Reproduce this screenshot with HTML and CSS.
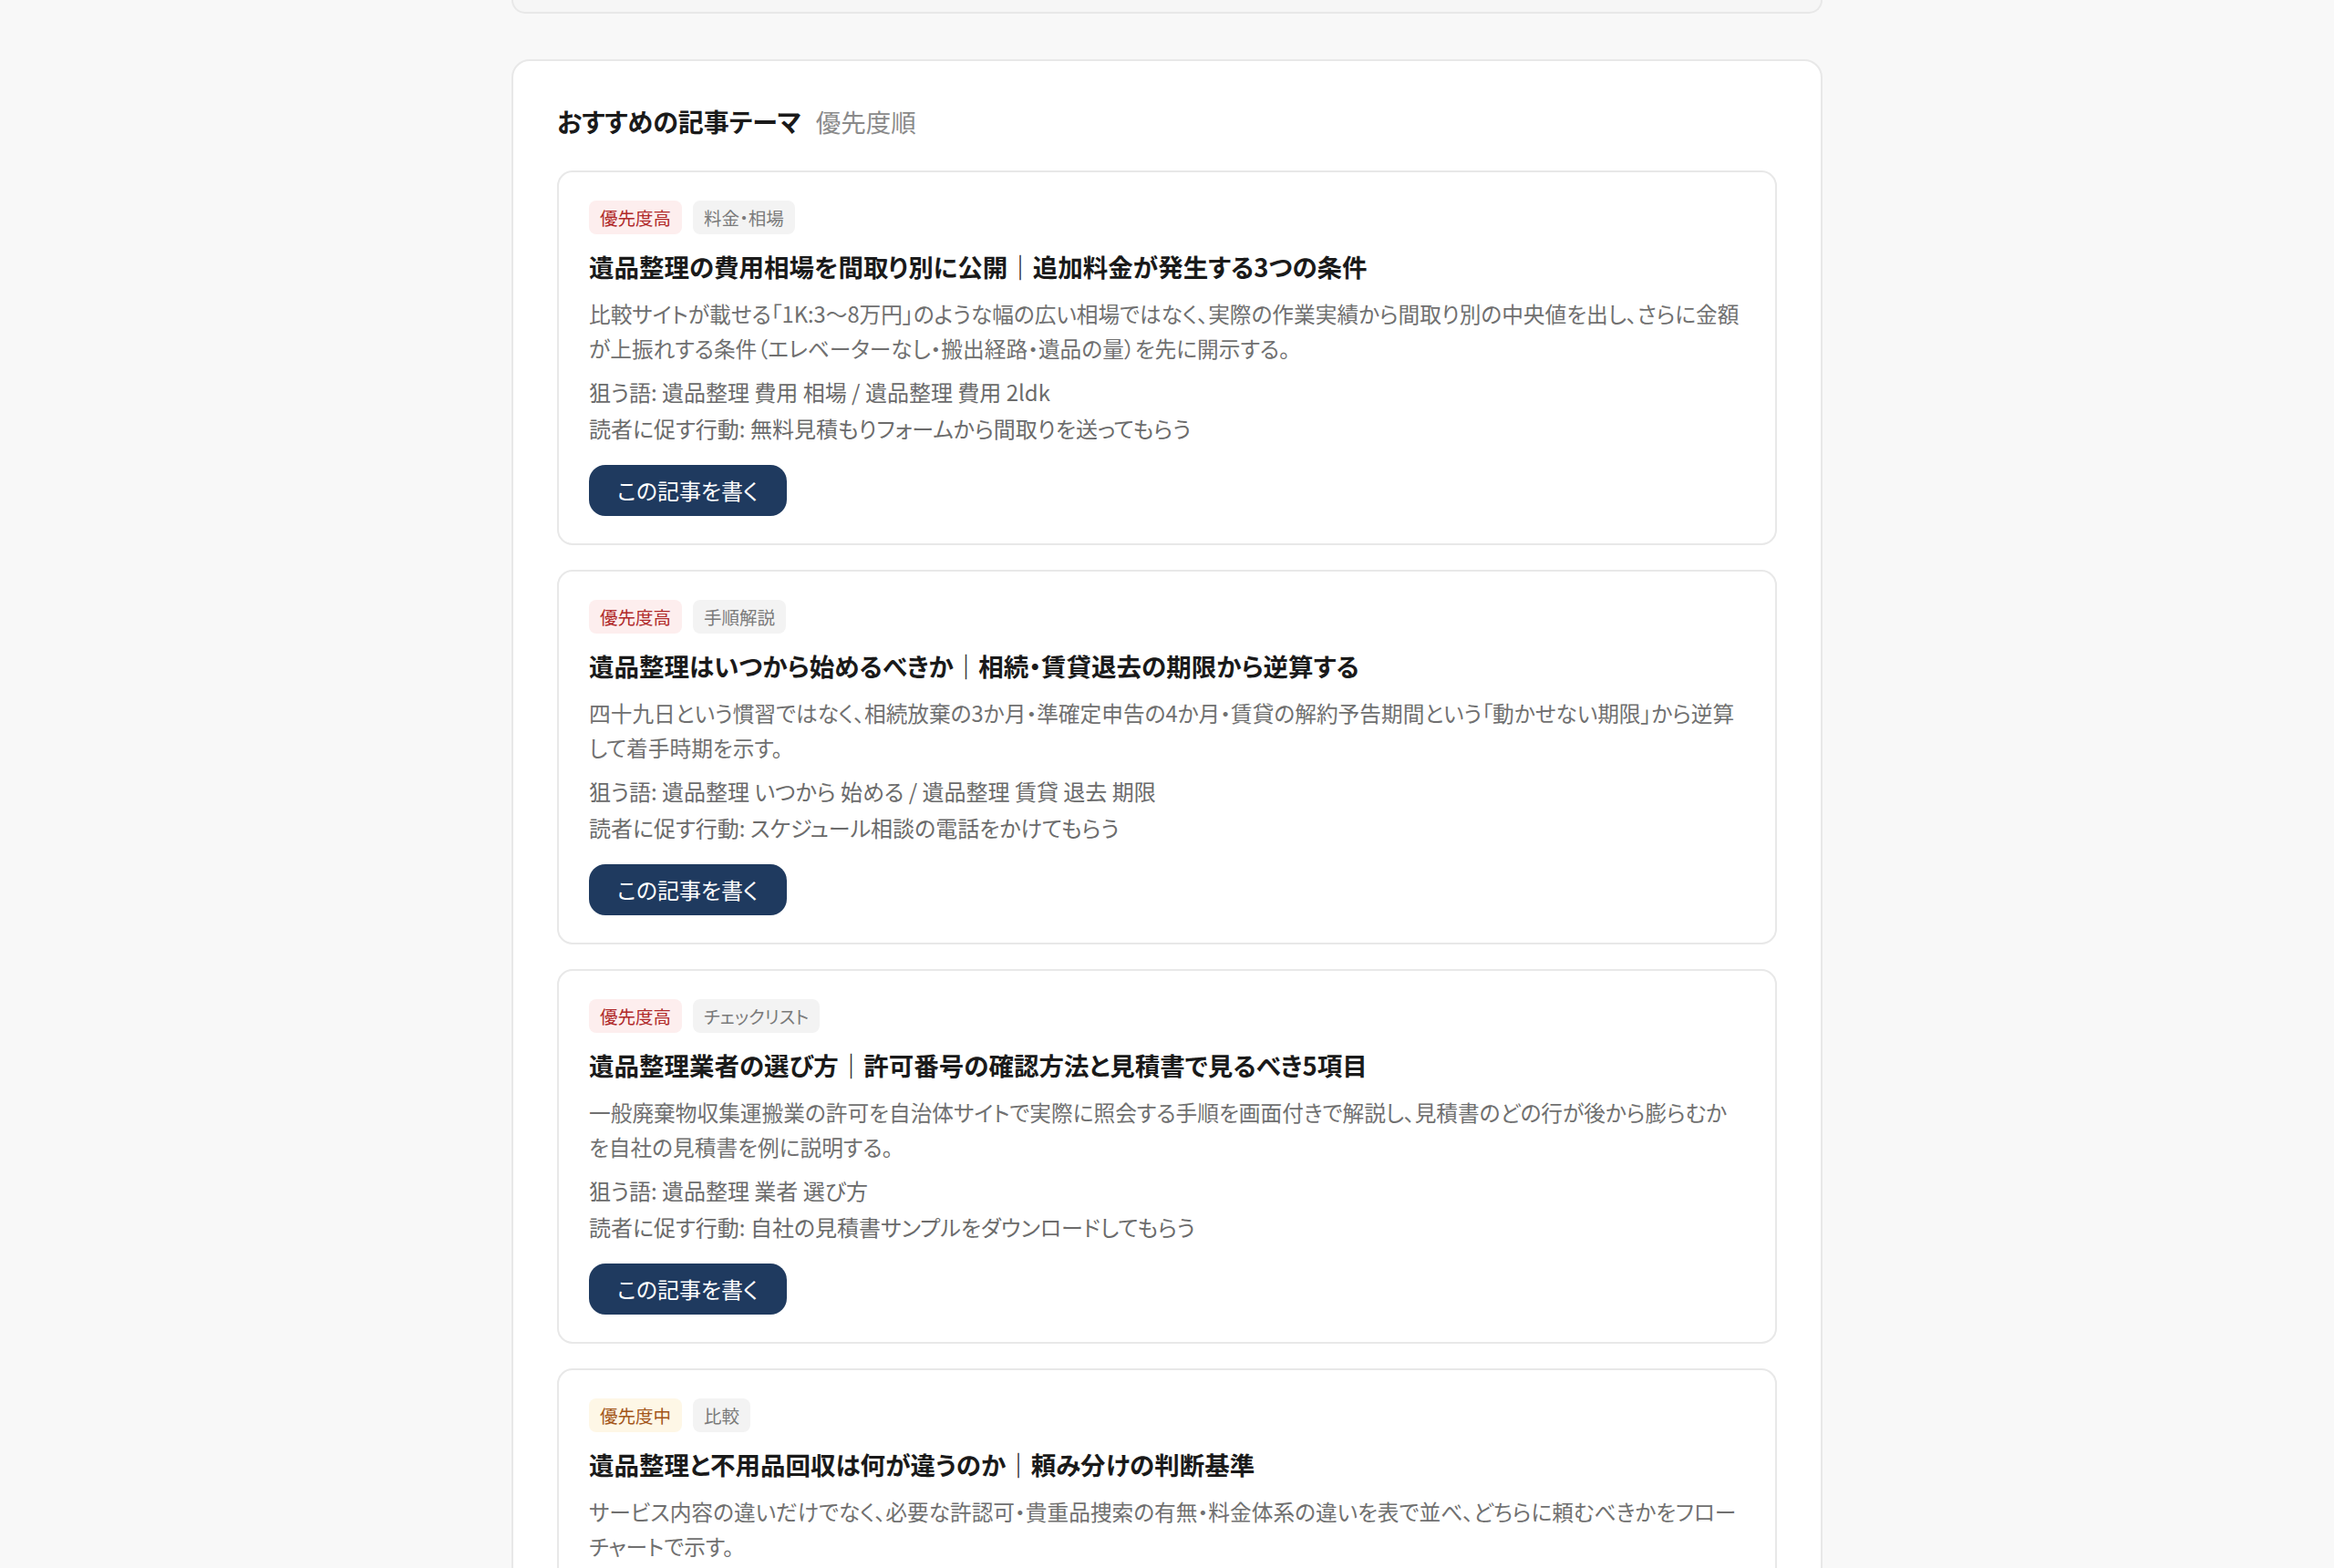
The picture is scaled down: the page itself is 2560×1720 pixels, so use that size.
FILE: index.html
```html
<!DOCTYPE html>
<html lang="ja">
<head>
<meta charset="utf-8">
<title>おすすめの記事テーマ</title>
<link rel="stylesheet" href="styles.css">
</head>
<body>
<div class="page">
  <div class="prev-card"></div>
  <section class="panel">
    <h2 class="panel-head"><span class="panel-title">おすすめの記事テーマ</span><span class="panel-sub">優先度順</span></h2>
    <div class="topics">
      <article class="topic">
        <div class="tags"><span class="tag tag-high">優先度高</span><span class="tag tag-cat">料金・相場</span></div>
        <h3 class="topic-title">遺品整理の費用相場を間取り別に公開｜追加料金が発生する3つの条件</h3>
        <p class="topic-desc">比較サイトが載せる「1K:3〜8万円」のような幅の広い相場ではなく、実際の作業実績から間取り別の中央値を出し、さらに金額が上振れする条件（エレベーターなし・搬出経路・遺品の量）を先に開示する。</p>
        <p class="topic-meta">狙う語: 遺品整理 費用 相場 / 遺品整理 費用 2ldk</p>
        <p class="topic-meta">読者に促す行動: 無料見積もりフォームから間取りを送ってもらう</p>
        <button class="btn">この記事を書く</button>
      </article>
      <article class="topic">
        <div class="tags"><span class="tag tag-high">優先度高</span><span class="tag tag-cat">手順解説</span></div>
        <h3 class="topic-title">遺品整理はいつから始めるべきか｜相続・賃貸退去の期限から逆算する</h3>
        <p class="topic-desc">四十九日という慣習ではなく、相続放棄の3か月・準確定申告の4か月・賃貸の解約予告期間という「動かせない期限」から逆算して着手時期を示す。</p>
        <p class="topic-meta">狙う語: 遺品整理 いつから 始める / 遺品整理 賃貸 退去 期限</p>
        <p class="topic-meta">読者に促す行動: スケジュール相談の電話をかけてもらう</p>
        <button class="btn">この記事を書く</button>
      </article>
      <article class="topic">
        <div class="tags"><span class="tag tag-high">優先度高</span><span class="tag tag-cat">チェックリスト</span></div>
        <h3 class="topic-title">遺品整理業者の選び方｜許可番号の確認方法と見積書で見るべき5項目</h3>
        <p class="topic-desc">一般廃棄物収集運搬業の許可を自治体サイトで実際に照会する手順を画面付きで解説し、見積書のどの行が後から膨らむかを自社の見積書を例に説明する。</p>
        <p class="topic-meta">狙う語: 遺品整理 業者 選び方</p>
        <p class="topic-meta">読者に促す行動: 自社の見積書サンプルをダウンロードしてもらう</p>
        <button class="btn">この記事を書く</button>
      </article>
      <article class="topic">
        <div class="tags"><span class="tag tag-mid">優先度中</span><span class="tag tag-cat">比較</span></div>
        <h3 class="topic-title">遺品整理と不用品回収は何が違うのか｜頼み分けの判断基準</h3>
        <p class="topic-desc">サービス内容の違いだけでなく、必要な許認可・貴重品捜索の有無・料金体系の違いを表で並べ、どちらに頼むべきかをフローチャートで示す。</p>
        <p class="topic-meta">狙う語: 遺品整理 不用品回収 違い</p>
        <p class="topic-meta">読者に促す行動: 無料相談フォームから問い合わせてもらう</p>
        <button class="btn">この記事を書く</button>
      </article>
    </div>
  </section>
</div>
</body>
</html>
```

FILE: styles.css
```css
html, body {
  margin: 0;
  padding: 0;
}

body {
  background: #f8f8f8;
  font-family: "Noto Sans CJK JP", "Noto Sans", sans-serif;
  font-feature-settings: "palt";
  color: #1a1a1a;
}

.page {
  width: 1438px;
  margin: 0 auto;
  padding-bottom: 60px;
}

.prev-card {
  height: 13px;
  background: #f6f6f6;
  border: 2px solid #e8e8e8;
  border-top: none;
  border-radius: 0 0 20px 20px;
}

.panel {
  margin-top: 50px;
  background: #ffffff;
  border: 2px solid #e8e8e8;
  border-radius: 20px;
  padding: 48px;
}

.panel-head {
  display: flex;
  align-items: baseline;
  gap: 16px;
  margin: 0 0 35px;
  line-height: 37px;
}

.panel-title {
  font-size: 28px;
  font-weight: 700;
  color: #1a1a1a;
}

.panel-sub {
  font-size: 27.5px;
  font-weight: 400;
  color: #8a8a8a;
}

.topics {
  display: flex;
  flex-direction: column;
  gap: 27px;
}

.topic {
  border: 2px solid #e8e8e8;
  border-radius: 17px;
  padding: 31px 33px 30px;
  display: flex;
  flex-direction: column;
  align-items: flex-start;
}

.tags {
  display: flex;
  gap: 12px;
  margin-bottom: 15px;
}

.tag {
  font-size: 19.5px;
  line-height: 37px;
  padding: 0 12px;
  border-radius: 8px;
}

.tag-high {
  background: #fdeeee;
  color: #b02a2a;
}

.tag-mid {
  background: #fef7e6;
  color: #a3561a;
}

.tag-cat {
  background: #f3f3f3;
  color: #7a7a7a;
}

.topic-title {
  font-size: 27.5px;
  font-weight: 700;
  line-height: 40px;
  margin: 0 0 14px;
  color: #1a1a1a;
}

.topic-desc {
  font-size: 23.7px;
  line-height: 37.5px;
  color: #707070;
  margin: 0 0 10px;
}

.topic-meta {
  font-size: 24px;
  line-height: 37.5px;
  color: #6b6b6b;
  margin: 0 0 2px;
}

.btn {
  margin-top: 20px;
  background: #1f3a5f;
  color: #ffffff;
  font-family: inherit;
  font-feature-settings: "palt";
  font-size: 24px;
  line-height: 56px;
  padding: 0 31px;
  border: none;
  border-radius: 18px;
}
```
